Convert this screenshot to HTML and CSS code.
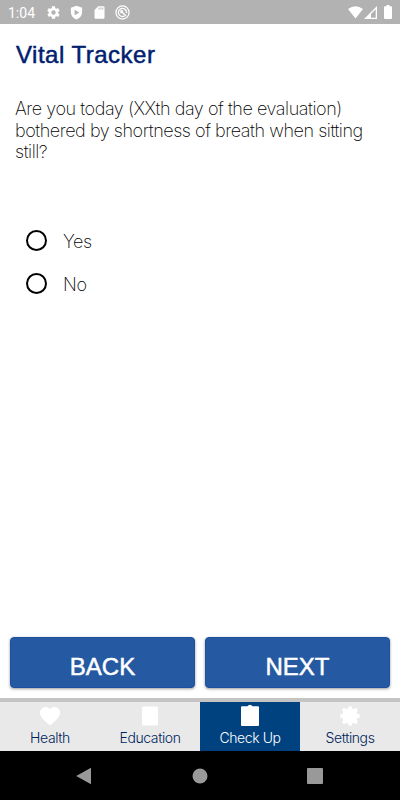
FILE: index.html
```html
<!DOCTYPE html>
<html lang="en">
<head>
  <meta charset="UTF-8" />
  <meta name="viewport" content="width=device-width, initial-scale=1.0"/>
  <title>Vital Tracker</title>
  <link rel="stylesheet" href="styles.css">
</head>
<body>
  <div class="status-bar">
    <span class="time">1:04</span>
    <svg class="status-icon" viewBox="0 0 24 24"><path fill-rule="evenodd" d="M19.4 13a7.500 7.500 0 0 0 0-2l2.100-1.600a.5.5 0 0 0 .1-.6l-2-3.500a.5.5 0 0 0-.6-.2l-2.500 1a7.300 7.300 0 0 0-1.700-1l-.4-2.600a.5.5 0 0 0-.5-.5h-4a.5.5 0 0 0-.5.5L9.100 5.100a7.300 7.300 0 0 0-1.700 1l-2.500-1a.5.5 0 0 0-.6.2l-2 3.500a.5.5 0 0 0 .1.6L4.500 11a7.500 7.500 0 0 0 0 2l-2.100 1.600a.5.5 0 0 0-.1.6l2 3.500a.5.5 0 0 0 .6.2l2.500-1a7.300 7.300 0 0 0 1.700 1l.4 2.600a.5.5 0 0 0 .5.5h4a.5.5 0 0 0 .5-.5l.4-2.600a7.300 7.300 0 0 0 1.700-1l2.500 1a.5.5 0 0 0 .6-.2l2-3.500a.5.5 0 0 0-.1-.6zM12 15.500a3.500 3.500 0 1 1 0-7 3.500 3.500 0 0 1 0 7z"/></svg>
    <svg class="status-icon" viewBox="0 0 24 24"><path fill-rule="evenodd" d="M12 1L3 4.500V11c0 5.500 3.800 10.300 9 12 5.200-1.700 9-6.500 9-12V4.500zM9 7.500l7.500 4.500L9 16.500z"/></svg>
    <svg class="status-icon" viewBox="0 0 24 24"><path fill-rule="evenodd" d="M18 2h-8L4 8v12c0 1.100.9 2 2 2h12c1.100 0 2-.9 2-2V4c0-1.100-.9-2-2-2zm-6 5h-1.500V4H12zm3 0h-1.500V4H15zm3 0h-1.500V4H18z"/></svg>
    <svg class="status-icon ring" viewBox="0 0 24 24"><circle cx="12" cy="12" r="10.500"/><path d="M15 17.800A6.500 6.500 0 1 1 18.400 13M10 10l7.500 7.500M9.500 13V9.500H13"/></svg>
    <span class="spacer"></span>
    <svg class="wifi" viewBox="0 0 15 13"><path d="M0 3Q7.500-2.500 15 3L7.500 12.500z"/></svg>
    <svg class="signal" viewBox="0 0 13 13"><path fill-rule="evenodd" d="M0 13L13 0v13zM7 11.700h4.700V3.300L7 8z"/></svg>
    <svg class="battery" viewBox="0 0 8 14"><path d="M2.500 0h3v1.300H7q1 0 1 1V13q0 1-1 1H1q-1 0-1-1V2.300q0-1 1-1h1.500z"/></svg>
  </div>

  <main class="content">
    <h1>Vital Tracker</h1>
    <p class="question">Are you today (XXth day of the evaluation)<br>bothered by shortness of breath when sitting<br>still?</p>
    <label class="option"><input type="radio" name="answer" value="yes" /><span>Yes</span></label>
    <label class="option"><input type="radio" name="answer" value="no" /><span>No</span></label>
  </main>

  <div class="buttons">
    <button>BACK</button>
    <button>NEXT</button>
  </div>

  <nav class="tabs">
    <a class="tab">
      <svg viewBox="0 0 24 24"><path d="M12 21.500l-1.500-1.300C5 15.300 2 12.400 2 8.700 2 5.600 4.400 3 7.500 3c1.800 0 3.400.8 4.500 2.200C13.100 3.800 14.700 3 16.500 3 19.600 3 22 5.600 22 8.700c0 3.700-3 6.600-8.500 11.500z"/></svg>
      <span>Health</span>
    </a>
    <a class="tab">
      <svg viewBox="0 0 24 24"><rect x="4" y="2.500" width="16" height="19" rx="1.500"/></svg>
      <span>Education</span>
    </a>
    <a class="tab active">
      <svg viewBox="0 0 24 24"><path d="M4 2.300H9.500Q10.300.8 12 .8t2.500 1.500H20q1 0 1 1v17.700q0 1-1 1H4q-1 0-1-1V3.300q0-1 1-1z"/></svg>
      <span>Check Up</span>
    </a>
    <a class="tab">
      <svg viewBox="0 0 24 24"><circle cx="12" cy="12" r="7.800"/><path class="teeth" d="M12 4v16M4 12h16M6.200 6.200l11.600 11.600M17.800 6.200L6.200 17.800"/></svg>
      <span>Settings</span>
    </a>
  </nav>

  <div class="system-nav">
    <svg viewBox="0 0 18 18"><path d="M1.200 9L16 .7v16.600z"/></svg>
    <svg viewBox="0 0 18 18"><circle cx="9" cy="9" r="7.500"/></svg>
    <svg viewBox="0 0 18 18"><rect x="0" y="1" width="16" height="16" rx="1"/></svg>
  </div>
</body>
</html>
```

FILE: styles.css
```css
* {
  box-sizing: border-box;
}
body {
  margin: 0;
  height: 800px;
  display: flex;
  flex-direction: column;
  background: #fff;
  font-family: Inter, "Liberation Sans", sans-serif;
  font-weight: 200;
  color: #000;
}
.status-bar {
  height: 24px;
  display: flex;
  align-items: center;
  padding: 0 8px;
  background: #b2b2b2;
  color: #fff;
  fill: #fff;
}
.time {
  width: 38px;
  font-family: Roboto, sans-serif;
  font-size: 14px;
  font-weight: 400;
  padding-top: 2px;
}
.status-icon {
  width: 15px;
  height: 15px;
  margin-right: 8px;
}
.ring {
  fill: none;
  stroke: #fff;
  stroke-width: 2;
}
.spacer {
  flex: 1;
}
.wifi {
  width: 15px;
  height: 13px;
}
.signal {
  width: 13px;
  height: 13px;
  margin: 0 7px 0 1px;
}
.battery {
  width: 8px;
  height: 14px;
}
.content {
  flex: 1;
  padding: 17px 15px 0 16px;
}
h1 {
  margin: 0;
  font-family: "Liberation Sans", Arial, sans-serif;
  font-size: 24px;
  font-weight: 400;
  line-height: 28px;
  letter-spacing: 0.5px;
  color: #002070;
  -webkit-text-stroke: 0.5px #002070;
}
.question {
  margin: 29px 0 56px -1px;
  font-size: 18px;
  line-height: 21.500px;
  letter-spacing: -0.44px;
  white-space: nowrap;
}
.option {
  display: flex;
  align-items: center;
  height: 43px;
  padding-left: 10px;
  font-size: 18px;
  letter-spacing: -0.4px;
}
.option span {
  padding-top: 2px;
}
.option input {
  appearance: none;
  width: 21px;
  height: 21px;
  margin: 0 16px 0 0;
  border: 2px solid #000;
  border-radius: 50%;
}
.buttons {
  display: flex;
  gap: 10px;
  padding: 0 10px 10px;
}
button {
  flex: 1;
  height: 51px;
  padding: 8px 0 0;
  border: 1px solid #1c50a0;
  border-radius: 4px;
  background: #2559a2;
  box-shadow: 0 1px 3px rgba(0, 0, 0, 0.4);
  color: #fff;
  font-family: "Liberation Sans", Arial, sans-serif;
  font-size: 24px;
  -webkit-text-stroke: 0.5px #fff;
}
.tabs {
  display: flex;
  height: 53px;
  border-top: 4px solid #c4c4c4;
  background: #e9e9e9;
}
.tab {
  flex: 1;
  display: flex;
  flex-direction: column;
  align-items: center;
  font-size: 14px;
  font-weight: 300;
  line-height: 18px;
  letter-spacing: -0.4px;
  color: #001f5b;
}
.tab svg {
  width: 24px;
  height: 24px;
  margin: 2px 0 1px;
  fill: #fff;
}
.active {
  background: #00427f;
  color: #fff;
}
.teeth {
  stroke: #fff;
  stroke-width: 4;
  stroke-linecap: round;
}
.system-nav {
  height: 49px;
  display: flex;
  justify-content: center;
  align-items: center;
  gap: 98px;
  background: #000;
}
.system-nav svg {
  width: 18px;
  height: 18px;
  fill: #999;
}
```
